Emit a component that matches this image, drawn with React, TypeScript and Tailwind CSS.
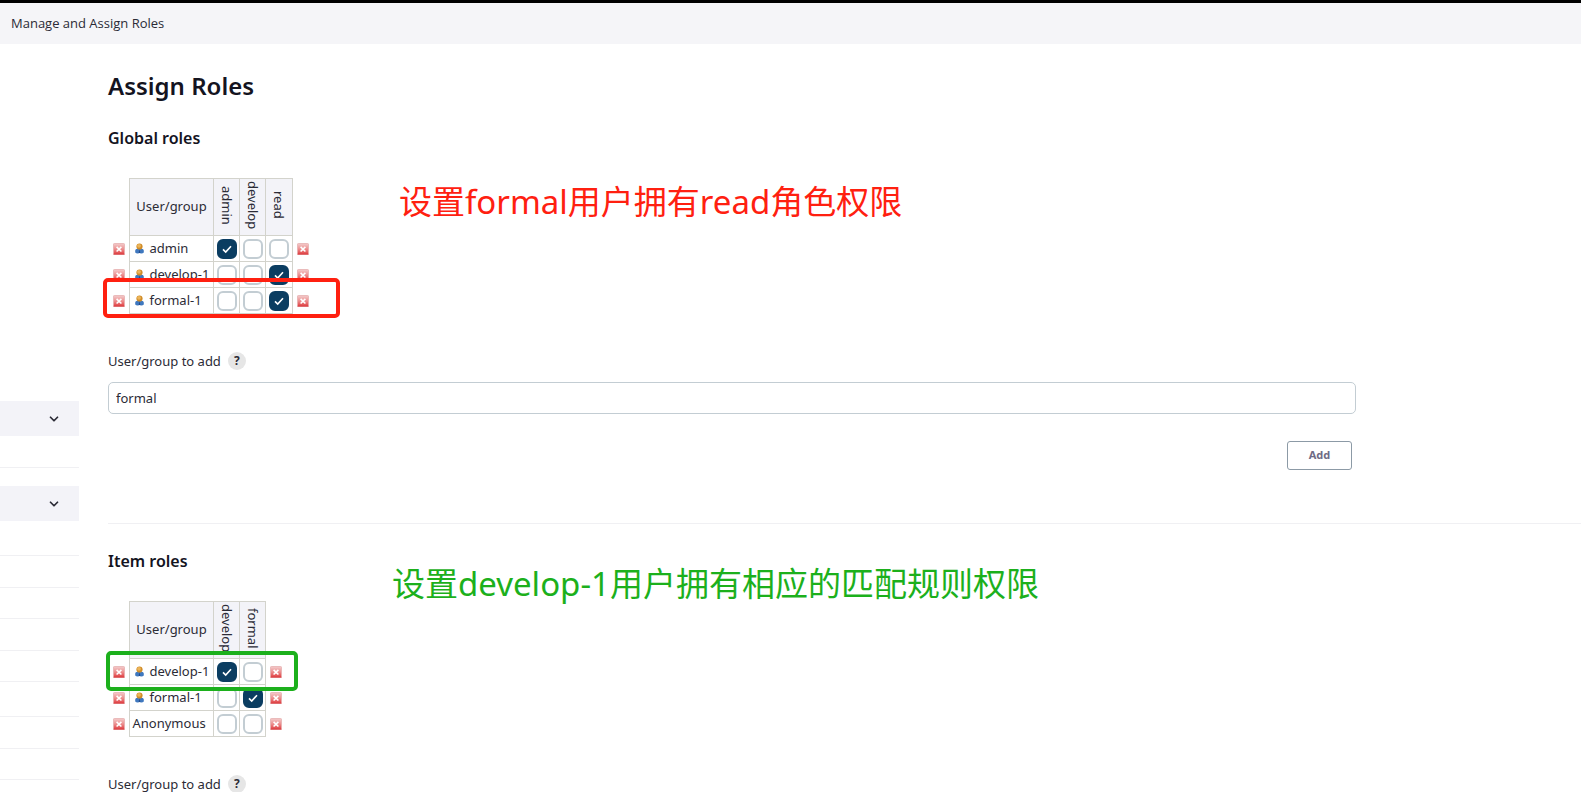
import { useId, useState } from "react";
import { ChevronDown } from "lucide-react";

function RemoveIcon() {
  return (
    <svg viewBox="0 0 12 12" className="block size-3" aria-hidden="true">
      <defs>
        <linearGradient id="removeFill" x1="0" y1="0" x2="0" y2="1">
          <stop offset="0" stopColor="#f3cccc" />
          <stop offset="0.5" stopColor="#ec8f8f" />
          <stop offset="1" stopColor="#e0393d" />
        </linearGradient>
      </defs>
      <rect x="0.5" y="0.5" width="11" height="11" rx="0.8" fill="url(#removeFill)" stroke="#e6b0b0" strokeWidth="0.8" />
      <path d="M0.5 11.3h11" stroke="#d8454a" strokeWidth="0.8" />
      <path d="M3.6 3.9l4.8 4.6M8.4 3.9l-4.8 4.6" stroke="#fff" strokeWidth="1.6" />
    </svg>
  );
}

function PersonIcon() {
  return (
    <svg viewBox="0 0 9 11" className="block h-[11px] w-[9px] shrink-0" aria-hidden="true">
      <path d="M0.2 9.500V7.400C0.500 6 1.800 5.400 4.500 5.400s4 0.600 4.300 2v2.100Q7.800 10.600 6 10.500L4.500 9.900 3 10.500Q1.200 10.600 0.200 9.500z" fill="#3f78bf" />
      <path d="M4.500 6l-.8 4h1.600z" fill="#234a8a" />
      <circle cx="4.500" cy="3.500" r="3.100" fill="#d08c28" />
      <circle cx="4" cy="2.800" r="1.900" fill="#ecb55a" />
    </svg>
  );
}

function RemoveButton({ name }: { name: string }) {
  return (
    <button type="button" aria-label={`Remove ${name}`} className="block">
      <RemoveIcon />
    </button>
  );
}

function RoleCheckbox({ label, initial }: { label: string; initial: boolean }) {
  const [checked, setChecked] = useState(initial);
  return (
    <label className="relative ml-[3px] block size-5">
      <input
        type="checkbox"
        aria-label={label}
        checked={checked}
        onChange={() => setChecked(!checked)}
        className="block size-5 appearance-none rounded-md border-2 border-[#c3cdd3] bg-white checked:border-[#0b3d61] checked:bg-[#0b3d61]"
      />
      {checked && (
        <svg viewBox="0 0 20 20" className="pointer-events-none absolute inset-0 size-5" aria-hidden="true">
          <path d="M6 10.400l2.700 2.700L14 7.200" fill="none" stroke="#fff" strokeWidth="1.600" />
        </svg>
      )}
    </label>
  );
}

type Row = { name: string; user: boolean; roles: boolean[] };

function RoleTable({ roles, rows }: { roles: string[]; rows: Row[] }) {
  return (
    <table className="border-collapse text-[13px] leading-5">
      <thead>
        <tr className="h-[57px]">
          <td className="w-[21px]" />
          <th className="w-[84px] border border-[#d3d3cc] bg-[#f3f3f8] p-0 pb-0.5 pl-px text-center font-normal">User/group</th>
          {roles.map((role, i) => (
            <th
              key={role}
              className={`border border-[#d3d3cc] bg-[#f3f3f8] p-0 pb-1 font-normal ${i === 2 ? "w-[27px]" : "w-[26px]"}`}
            >
              <span className="ml-[3px] block h-[51px] w-5 text-center leading-5 [writing-mode:vertical-rl]">{role}</span>
            </th>
          ))}
          <td className="w-[22px]" />
        </tr>
      </thead>
      <tbody>
        {rows.map((row) => (
          <tr key={row.name} className="h-[26px]">
            <td className="p-0 pl-[5px]">
              <RemoveButton name={row.name} />
            </td>
            <td className="border border-[#d3d3cc] p-0">
              <div className={row.user ? "flex items-center gap-1.5 pb-0.5 pl-[5px]" : "pb-0.5 pl-[3px]"}>
                {row.user && (
                  <span className="pt-0.5">
                    <PersonIcon />
                  </span>
                )}
                <span className="whitespace-nowrap">{row.name}</span>
              </div>
            </td>
            {row.roles.map((on, i) => (
              <td key={roles[i]} className="border border-[#d3d3cc] p-0">
                <RoleCheckbox label={`${row.name} ${roles[i]}`} initial={on} />
              </td>
            ))}
            <td className="p-0 pl-1">
              <RemoveButton name={row.name} />
            </td>
          </tr>
        ))}
      </tbody>
    </table>
  );
}

function AddField({ value, action }: { value: string; action?: string }) {
  const id = useId();
  return (
    <div className="max-w-[1248px]">
      <div className="flex h-5 items-center gap-[7px]">
        <label htmlFor={id} className="text-[13px] leading-5">
          User/group to add
        </label>
        <button type="button" aria-label="Help" className="size-[18px] rounded-full bg-[#e6e6e6] text-xs leading-[18px] font-bold">
          ?
        </button>
      </div>
      <input
        id={id}
        defaultValue={value}
        className="mt-[11px] block h-8 w-full rounded-[5px] border border-[#c3cdd3] bg-white px-[7px] text-[13px]"
      />
      {action && (
        <div className="mt-[27px] flex justify-end pr-1">
          <button type="button" className="h-[29px] w-[65px] rounded-[3px] border border-[#8c9aa6] text-[11px] font-bold text-[#6f6b85]">
            {action}
          </button>
        </div>
      )}
    </div>
  );
}

function SideHeader() {
  return (
    <button type="button" aria-label="Collapse section" className="flex h-[35px] w-full items-center justify-end bg-[#f3f3f8] pr-[18px]">
      <ChevronDown className="size-[14px]" strokeWidth={3} />
    </button>
  );
}

function SideRow({ className }: { className: string }) {
  return <div className={`border-b border-[#f0f0f3] ${className}`} />;
}

export default function App() {
  return (
    <div className="h-screen overflow-hidden bg-white font-['Noto_Sans','Noto_Sans_CJK_SC',sans-serif] text-[#2b2b36]">
      <header className="border-t-[3px] border-black bg-[#f5f5f8]">
        <nav className="flex h-[41px] items-center px-[11px] font-['Open_Sans',sans-serif] text-[13px]">
          <a href="#roles">Manage and Assign Roles</a>
        </nav>
      </header>
      <div className="flex">
        <aside className="w-[79px] shrink-0 pt-[357px]">
          <SideHeader />
          <SideRow className="mb-[18px] h-8" />
          <SideHeader />
          <SideRow className="h-[35px]" />
          <SideRow className="h-8" />
          <SideRow className="h-[31px]" />
          <SideRow className="h-8" />
          <SideRow className="h-[31px]" />
          <SideRow className="h-[35px]" />
          <SideRow className="h-8" />
          <SideRow className="h-[31px]" />
        </aside>
        <main className="min-w-0 flex-1 pt-[26px] pl-[29px]">
          <h1 className="text-2xl leading-8 font-semibold text-[#14141f]">Assign Roles</h1>
          <section className="pt-6">
            <h2 className="text-base leading-6 font-semibold text-[#14141f]">Global roles</h2>
            <div className="relative mt-7 mb-[37px]">
              <RoleTable
                roles={["admin", "develop", "read"]}
                rows={[
                  { name: "admin", user: true, roles: [true, false, false] },
                  { name: "develop-1", user: true, roles: [false, false, true] },
                  { name: "formal-1", user: true, roles: [false, false, true] },
                ]}
              />
              <div className="pointer-events-none absolute top-[100px] -left-[5px] h-[40px] w-[237px] rounded-[5px] border-4 border-[#ff2010]" />
              <p className="absolute top-0 left-[291px] text-[33px] leading-[48px] whitespace-nowrap text-[#ff2010]">
                设置formal用户拥有read角色权限
              </p>
            </div>
            <AddField value="formal" action="Add" />
          </section>
          <hr className="mt-[53px] border-[#f0f0f3]" />
          <section className="pt-[25px]">
            <h2 className="text-base leading-6 font-semibold text-[#14141f]">Item roles</h2>
            <div className="relative mt-7 mb-[37px]">
              <RoleTable
                roles={["develop", "formal"]}
                rows={[
                  { name: "develop-1", user: true, roles: [true, false] },
                  { name: "formal-1", user: true, roles: [false, true] },
                  { name: "Anonymous", user: false, roles: [false, false] },
                ]}
              />
              <div className="pointer-events-none absolute top-[50px] -left-[2px] h-[40px] w-[192px] rounded-[5px] border-4 border-[#1cb01c]" />
              <p className="absolute -top-[41px] left-[284px] text-[33px] leading-[48px] whitespace-nowrap text-[#1cb01c]">
                设置develop-1用户拥有相应的匹配规则权限
              </p>
            </div>
            <AddField value="" />
          </section>
        </main>
      </div>
    </div>
  );
}
